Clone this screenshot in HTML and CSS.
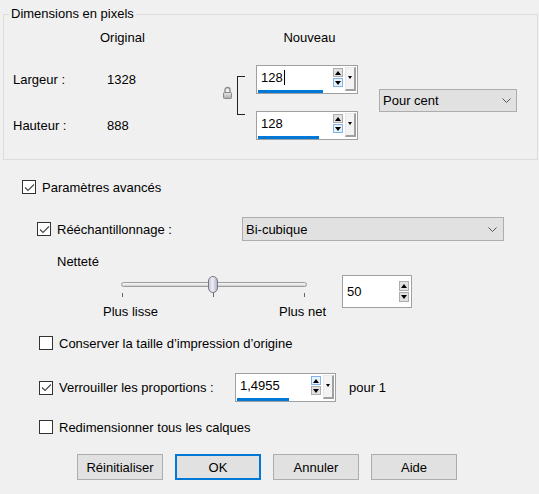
FILE: index.html
```
<!DOCTYPE html>
<html lang="fr">
<head>
<meta charset="utf-8">
<title>Redimensionner</title>
<link rel="stylesheet" href="styles.css">
</head>
<body>
<div class="group">
  <div class="legend">Dimensions en pixels</div>
  <div class="dims">
    <div class="h-orig">Original</div>
    <div class="h-new">Nouveau</div>
    <div class="lbl row-w">Largeur :</div>
    <div class="val row-w">1328</div>
    <div class="lbl row-h">Hauteur :</div>
    <div class="val row-h">888</div>
    <div class="lock">
      <svg width="9" height="13" viewBox="0 0 9 13">
        <defs>
          <linearGradient id="lg" x1="0" y1="0" x2="0" y2="1">
            <stop offset="0" stop-color="#e8e8e8"/>
            <stop offset="1" stop-color="#a9a9a9"/>
          </linearGradient>
        </defs>
        <path d="M2 6.5 V4 A2.5 2.5 0 0 1 7 4 V6.5" fill="none" stroke="#8c8c8c" stroke-width="1.4"/>
        <rect x="0.5" y="6.5" width="8" height="6" rx="0.8" fill="url(#lg)" stroke="#8a8a8a"/>
      </svg>
    </div>
    <div class="bracket"></div>
    <div class="spin spin-w">
      <div class="field"><span class="txt">128<span class="caret"></span></span><span class="bar" style="width:65px"></span></div>
      <div class="btns"><span class="sbtn"><i class="tri-up"></i></span><span class="sbtn hot"><i class="tri-dn"></i></span></div>
      <div class="drop"><i class="tri-sm"></i></div>
    </div>
    <div class="spin spin-h">
      <div class="field"><span class="txt">128</span><span class="bar" style="width:61px"></span></div>
      <div class="btns"><span class="sbtn"><i class="tri-up"></i></span><span class="sbtn hot"><i class="tri-dn"></i></span></div>
      <div class="drop"><i class="tri-sm"></i></div>
    </div>
    <div class="combo unit">
      <span>Pour cent</span>
      <svg width="9" height="5" viewBox="0 0 9 5"><path d="M0.5 0.5 L4.5 4.5 L8.5 0.5" fill="none" stroke="#555" stroke-width="1"/></svg>
    </div>
  </div>
</div>

<div class="main">
  <label class="chk row-adv">
    <span class="box"><svg width="11" height="9" viewBox="0 0 11 9"><path d="M1 4.5 L4 7.5 L10 1.5" fill="none" stroke="#444" stroke-width="1.1"/></svg></span>
    <span>Paramètres avancés</span>
  </label>

  <div class="row-resample">
    <label class="chk resample-lbl">
      <span class="box"><svg width="11" height="9" viewBox="0 0 11 9"><path d="M1 4.5 L4 7.5 L10 1.5" fill="none" stroke="#444" stroke-width="1.1"/></svg></span>
      <span>Rééchantillonnage :</span>
    </label>
    <div class="combo method">
      <span>Bi-cubique</span>
      <svg width="9" height="5" viewBox="0 0 9 5"><path d="M0.5 0.5 L4.5 4.5 L8.5 0.5" fill="none" stroke="#555" stroke-width="1"/></svg>
    </div>
  </div>

  <div class="sharp-title">Netteté</div>

  <div class="row-sharp">
    <div class="sharp">
      <div class="slider">
        <div class="track"></div>
        <div class="thumb"></div>
        <div class="ticks"><i></i><i></i><i></i></div>
      </div>
      <div class="slabels"><span>Plus lisse</span><span>Plus net</span></div>
    </div>
    <div class="spin spin-small">
      <div class="field"><span class="txt">50</span></div>
      <div class="btns"><span class="sbtn"><i class="tri-up"></i></span><span class="sbtn"><i class="tri-dn"></i></span></div>
    </div>
  </div>

  <label class="chk row-keep">
    <span class="box"></span>
    <span>Conserver la taille d’impression d’origine</span>
  </label>

  <div class="row-lock">
    <label class="chk lock-lbl">
      <span class="box"><svg width="11" height="9" viewBox="0 0 11 9"><path d="M1 4.5 L4 7.5 L10 1.5" fill="none" stroke="#444" stroke-width="1.1"/></svg></span>
      <span>Verrouiller les proportions :</span>
    </label>
    <div class="spin spin-ratio">
      <div class="field"><span class="txt">1,4955</span><span class="bar" style="width:52px"></span></div>
      <div class="btns"><span class="sbtn hot"><i class="tri-up"></i></span><span class="sbtn"><i class="tri-dn"></i></span></div>
      <div class="drop"><i class="tri-sm"></i></div>
    </div>
    <span class="per">pour 1</span>
  </div>

  <label class="chk row-all">
    <span class="box"></span>
    <span>Redimensionner tous les calques</span>
  </label>

  <div class="buttons">
    <button class="btn">Réinitialiser</button>
    <button class="btn default">OK</button>
    <button class="btn">Annuler</button>
    <button class="btn">Aide</button>
  </div>
</div>
</body>
</html>
```
FILE: styles.css
```
html, body {
  margin: 0;
  padding: 0;
}
body {
  width: 539px;
  height: 494px;
  overflow: hidden;
  background: #f0f0f0;
  color: #000;
  font-family: "Liberation Sans", Arial, sans-serif;
  font-size: 13px;
  line-height: 15px;
}

/* ---------- group box ---------- */
.group {
  position: relative;
  margin: 14px 0 0 3px;
  width: 535px;
  height: 146px;
  box-sizing: border-box;
  border: 1px solid #dcdcdc;
  padding: 15px 0 0 9px;
}
.legend {
  position: absolute;
  top: -9px;
  left: 5px;
  padding: 0 2px;
  background: #f0f0f0;
  line-height: 15px;
}
.dims {
  display: grid;
  grid-template-columns: 94px 116px 14px 19px 102px 21px 138px;
  grid-template-rows: 15px 20px 29px 17px 29px;
}
.h-orig {
  grid-column: 2;
  grid-row: 1;
  margin-left: -7px;
}
.h-new {
  grid-column: 5;
  grid-row: 1;
  text-align: center;
  padding-left: 5px;
}
.lbl { grid-column: 1; align-self: center; }
.val { grid-column: 2; align-self: center; }
.row-w { grid-row: 3; }
.row-h { grid-row: 5; }
.lock {
  grid-column: 3;
  grid-row: 3 / 6;
  align-self: start;
  margin-top: 21px;
  height: 13px;
}
.lock svg { display: block; }
.bracket {
  grid-column: 4;
  grid-row: 3 / 6;
  align-self: start;
  margin-top: 11px;
  width: 8px;
  height: 39px;
  box-sizing: border-box;
  border: 1.5px solid #222;
  border-right: none;
}
.spin-w { grid-column: 5; grid-row: 3; }
.spin-h { grid-column: 5; grid-row: 5; }
.unit {
  grid-column: 7;
  grid-row: 3 / 6;
  align-self: start;
  margin-top: 24px;
  height: 23px;
}

/* ---------- spinner ---------- */
.spin {
  display: flex;
  width: 102px;
  height: 29px;
  box-sizing: border-box;
  border: 1px solid #a0a0a0;
  background: #fff;
}
.field {
  flex: 1;
  display: flex;
  flex-direction: column;
  justify-content: space-between;
  align-items: flex-start;
  padding: 4px 0 0 1px;
}
.txt {
  padding-left: 3px;
  line-height: 15px;
  display: flex;
  align-items: center;
}
.caret {
  display: inline-block;
  width: 1px;
  height: 15px;
  margin-left: 1px;
  background: #000;
}
.bar {
  display: block;
  height: 3px;
  background: #0078d7;
}
.btns {
  display: flex;
  flex-direction: column;
  gap: 1px;
  padding-top: 2px;
  width: 10px;
}
.sbtn {
  display: flex;
  align-items: center;
  justify-content: center;
  width: 10px;
  height: 9px;
  box-sizing: border-box;
  border: 1px solid #adadad;
  background: #e1e1e1;
}
.sbtn.hot {
  border-color: #7eb4ea;
  background: #e5f1fb;
}
.tri-up {
  width: 0;
  height: 0;
  border-left: 3px solid transparent;
  border-right: 3px solid transparent;
  border-bottom: 4px solid #000;
}
.tri-dn {
  width: 0;
  height: 0;
  border-left: 3px solid transparent;
  border-right: 3px solid transparent;
  border-top: 4px solid #000;
}
.drop {
  display: flex;
  justify-content: center;
  align-items: flex-start;
  width: 11px;
  height: 24px;
  box-sizing: border-box;
  margin: 1px 1px 0 2px;
  padding-top: 8px;
  background: #f3f3f3;
  border-top: 1px solid #e8e8e8;
  border-left: 1px solid #e8e8e8;
  border-right: 2px solid #a0a0a0;
  border-bottom: 2px solid #a0a0a0;
}
.tri-sm {
  width: 0;
  height: 0;
  border-left: 2.5px solid transparent;
  border-right: 2.5px solid transparent;
  border-top: 3px solid #000;
}
.spin-small {
  width: 70px;
  height: 33px;
}
.spin-small .field {
  padding-top: 8px;
}
.spin-small .btns {
  padding-top: 5px;
  margin-right: 2px;
}
.spin-small .sbtn {
  height: 10px;
}
.spin-ratio {
  width: 101px;
}

/* ---------- combobox ---------- */
.combo {
  display: flex;
  align-items: center;
  justify-content: space-between;
  box-sizing: border-box;
  border: 1px solid #adadad;
  background: #e1e1e1;
  padding: 0 5px 0 3px;
}
.combo svg { display: block; }

/* ---------- lower part ---------- */
.main {
  display: flex;
  flex-direction: column;
  align-items: flex-start;
}
.chk {
  display: flex;
  align-items: center;
  gap: 6px;
  height: 16px;
}
.box {
  display: flex;
  align-items: center;
  justify-content: center;
  width: 14px;
  height: 14px;
  box-sizing: border-box;
  border: 1px solid #333;
  background: #fff;
}
.box svg { display: block; }
.row-adv {
  margin: 19px 0 0 22px;
}
.row-resample {
  display: flex;
  align-items: center;
  height: 24px;
  margin: 22px 0 0 37px;
}
.resample-lbl {
  width: 205px;
}
.method {
  width: 262px;
  height: 24px;
  padding: 0 6px 0 3px;
}
.sharp-title {
  margin: 13px 0 0 57px;
  line-height: 16px;
}
.row-sharp {
  display: flex;
  align-items: flex-start;
  gap: 16px;
  margin: 5px 0 0 103px;
}
.sharp {
  width: 223px;
}
.slider {
  position: relative;
  margin-left: 18px;
  width: 186px;
  padding-top: 7px;
}
.track {
  height: 5px;
  box-sizing: border-box;
  border: 1px solid #9c9c9c;
  border-radius: 3px;
  background: linear-gradient(#fbfbfb, #d0d0d0);
}
.thumb {
  position: absolute;
  left: 87px;
  top: 1px;
  width: 10px;
  height: 17px;
  box-sizing: border-box;
  border: 1px solid #77778a;
  border-radius: 5px;
  background: linear-gradient(90deg, #c9c9d8, #eeeef6 45%, #b4b4c8);
}
.ticks {
  display: flex;
  justify-content: space-between;
  margin-top: 6px;
  padding: 0 2px 0 1px;
}
.ticks i {
  display: block;
  width: 1px;
  height: 4px;
  background: #666;
}
.slabels {
  display: flex;
  justify-content: space-between;
  margin-top: 7px;
  line-height: 16px;
}
.row-keep {
  margin: 15px 0 0 39px;
}
.row-lock {
  display: flex;
  align-items: center;
  height: 29px;
  margin: 22px 0 0 39px;
}
.lock-lbl {
  width: 196px;
}
.per {
  margin-left: 13px;
}
.row-all {
  margin: 17px 0 0 39px;
}
.buttons {
  display: flex;
  gap: 12px;
  margin: 19px 0 0 77px;
}
.btn {
  display: flex;
  align-items: center;
  justify-content: center;
  width: 86px;
  height: 26px;
  box-sizing: border-box;
  margin: 0;
  padding: 0;
  border: 1px solid #adadad;
  background: #e1e1e1;
  color: #000;
  font-family: "Liberation Sans", Arial, sans-serif;
  font-size: 13px;
}
.btn.default {
  border: 2px solid #0078d7;
}
```
